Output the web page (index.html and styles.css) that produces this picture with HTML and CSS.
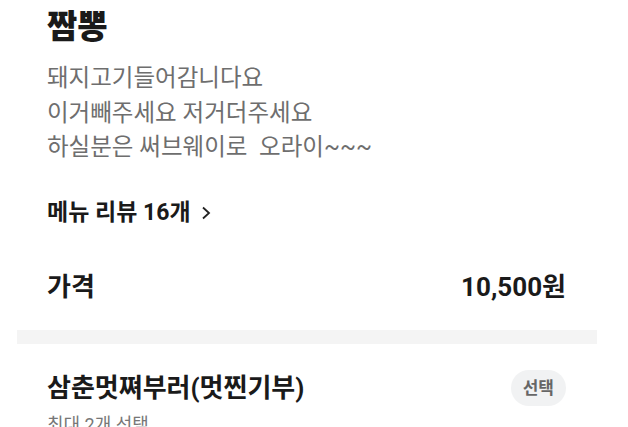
FILE: index.html
```html
<!DOCTYPE html>
<html lang="ko">
<head>
<meta charset="utf-8">
<link rel="stylesheet" href="styles.css">
</head>
<body>
<div class="page">
  <section class="info">
    <h1 class="title">짬뽕</h1>
    <p class="desc">돼지고기들어감니다요<br>이거빼주세요 저거더주세요<br>하실분은 써브웨이로&nbsp; 오라이~~~</p>
    <div class="review">메뉴 리뷰 16개 <svg class="chev" width="10" height="16" viewBox="0 0 10 16"><path d="M2 2.5 L8 8 L2 13.5" fill="none" stroke="#222" stroke-width="1.8"/></svg></div>
    <div class="price-row">
      <span class="price-label">가격</span>
      <span class="price">10,500원</span>
    </div>
  </section>
  <div class="band"></div>
  <section class="option">
    <div class="option-head">
      <div class="option-title">삼춘멋쪄부러(멋찐기부)</div>
      <span class="pill">선택</span>
    </div>
    <div class="option-sub">최대 2개 선택</div>
  </section>
</div>
</body>
</html>
```
FILE: styles.css
```css
html, body { margin: 0; padding: 0; background: #fff; }
body {
  font-family: Roboto, "Noto Sans CJK KR", sans-serif;
  color: #1a1a1a;
  width: 628px;
  height: 427px;
  overflow: hidden;
}
.page { padding: 0 31px 0 17px; }
.info { padding: 0 31px 0 30px; }
.title {
  margin: 0;
  padding-top: 7px;
  font-size: 33px;
  font-weight: 900;
  line-height: 40px;
}
.desc {
  margin: 14px 0 0;
  font-size: 23.5px;
  line-height: 34.5px;
  color: #6e6e6e;
}
.review {
  margin-top: 34px;
  font-size: 23px;
  font-weight: 700;
  line-height: 28px;
  display: flex;
  align-items: center;
  gap: 10px;
}
.chev { margin-top: 1px; }
.price-row {
  margin-top: 44px;
  display: flex;
  justify-content: space-between;
  align-items: center;
  font-size: 26px;
  font-weight: 700;
  line-height: 32px;
}
.band {
  margin-top: 27px;
  height: 14px;
  background: #f4f4f4;
}
.option { padding: 0 31px 0 30px; }
.option-head {
  margin-top: 26px;
  display: flex;
  justify-content: space-between;
  align-items: center;
}
.option-title {
  font-size: 26px;
  font-weight: 700;
  line-height: 36px;
}
.pill {
  background: #f1f2f3;
  color: #666;
  font-size: 17px;
  font-weight: 700;
  padding: 0 12px;
  height: 36px;
  line-height: 36px;
  border-radius: 18px;
}
.option-sub {
  margin-top: 6px;
  font-size: 18px;
  line-height: 26px;
  color: #777;
}
```
